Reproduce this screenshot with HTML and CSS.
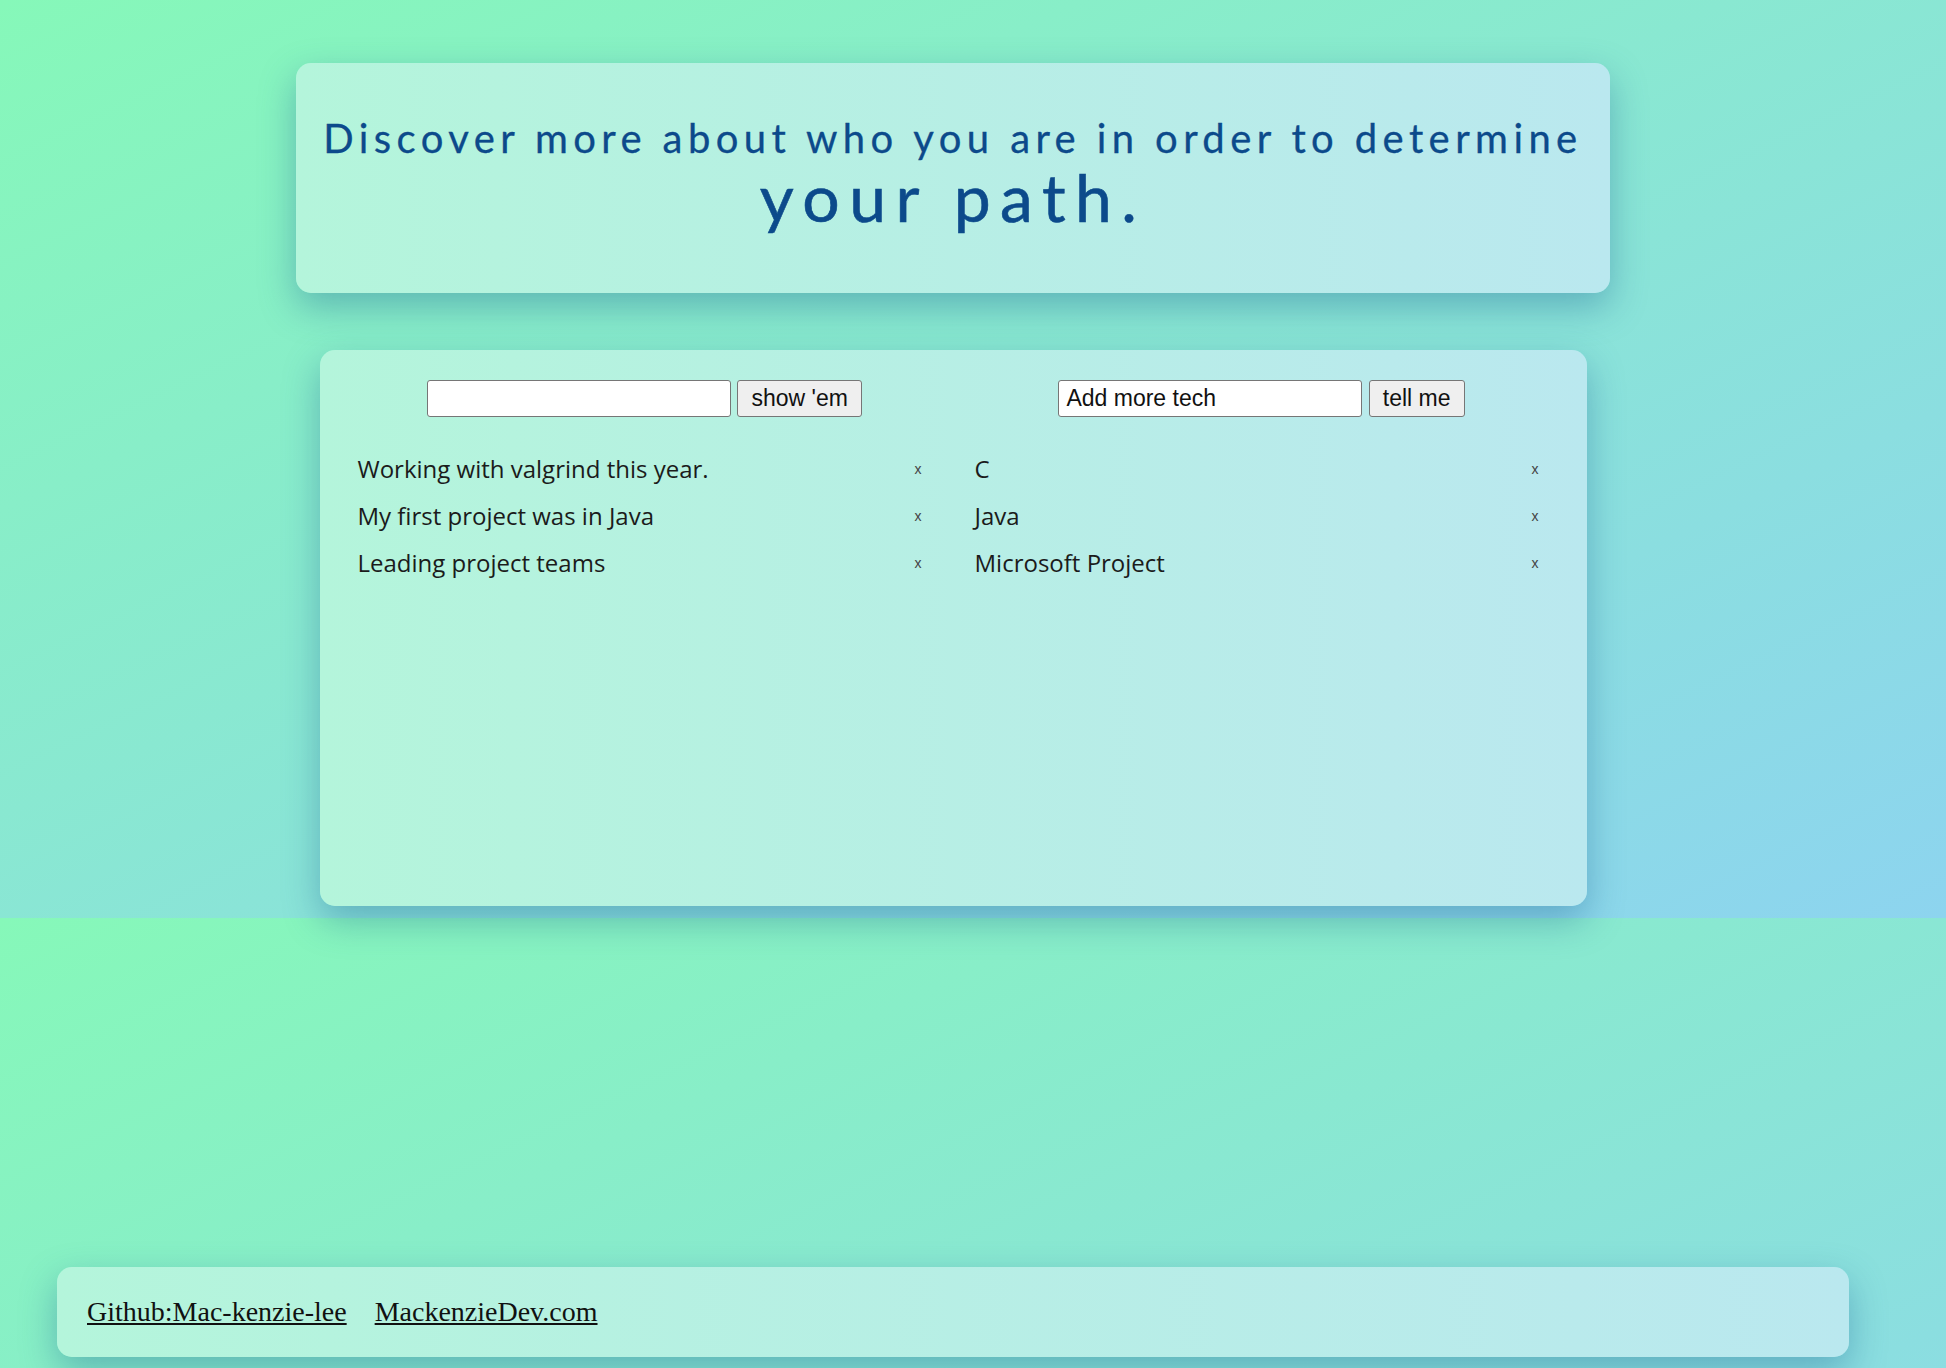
FILE: index.html
```html
<!DOCTYPE html>
<html lang="en">
<head>
<meta charset="utf-8">
<title>Discover your path</title>
<link rel="stylesheet" href="styles.css">
</head>
<body>
  <header class="hero">
    <h1 class="hero-title">
      <span class="hero-line">Discover more about who you are in order to determine</span>
      <span class="hero-big">your path.</span>
    </h1>
  </header>

  <main class="board">
    <section class="col">
      <form class="add-form">
        <input class="add-input" type="text" value="">
        <button class="add-btn" type="button">show 'em</button>
      </form>
      <ul class="items">
        <li class="item"><span class="item-text">Working with valgrind this year.</span><span class="item-x">x</span></li>
        <li class="item"><span class="item-text">My first project was in Java</span><span class="item-x">x</span></li>
        <li class="item"><span class="item-text">Leading project teams</span><span class="item-x">x</span></li>
      </ul>
    </section>
    <section class="col">
      <form class="add-form">
        <input class="add-input" type="text" value="Add more tech">
        <button class="add-btn" type="button">tell me</button>
      </form>
      <ul class="items">
        <li class="item"><span class="item-text">C</span><span class="item-x">x</span></li>
        <li class="item"><span class="item-text">Java</span><span class="item-x">x</span></li>
        <li class="item"><span class="item-text">Microsoft Project</span><span class="item-x">x</span></li>
      </ul>
    </section>
  </main>

  <footer class="foot">
    <a class="foot-link" href="#">Github:Mac-kenzie-lee</a>
    <a class="foot-link" href="#">MackenzieDev.com</a>
  </footer>
</body>
</html>
```

FILE: styles.css
```css
html {
  background-image: linear-gradient(to bottom right, #86f8b9, #8dd4ef);
  background-size: 100% 918px;
  background-repeat: repeat-y;
}

body {
  margin: 0;
  min-height: 1368px;
  box-sizing: border-box;
  padding-right: 40px;
  display: flex;
  flex-direction: column;
  align-items: center;
}

.hero,
.board,
.foot {
  border-radius: 15px;
  background: linear-gradient(to right, #b4f5db, #bae8ef);
  box-shadow: 0 14px 36px rgba(30, 100, 150, 0.4);
}

.hero {
  width: 1314px;
  height: 230px;
  margin-top: 63px;
  box-sizing: border-box;
  padding-top: 51px;
}

.hero-title {
  margin: 0;
  font-family: Lato, "Open Sans", sans-serif;
  font-weight: 400;
  color: #0c4a8b;
  text-align: center;
}

.hero-line {
  display: block;
  font-size: 40px;
  line-height: 48px;
  letter-spacing: 5.4px;
  -webkit-text-stroke: 0.3px #0c4a8b;
}

.hero-big {
  display: block;
  font-size: 66px;
  line-height: 69px;
  letter-spacing: 9.4px;
  -webkit-text-stroke: 0.6px #0c4a8b;
}

.board {
  width: 1267px;
  height: 556px;
  margin-top: 57px;
  box-sizing: border-box;
  padding: 30px 37px 0;
  display: grid;
  grid-template-columns: 1fr 1fr;
  column-gap: 41px;
  align-items: start;
}

.add-form {
  margin: 0;
  text-align: center;
  font-family: "Liberation Sans", Arial, sans-serif;
  font-size: 23px;
}

.add-input {
  width: 304px;
  height: 37px;
  box-sizing: border-box;
  padding: 0 7px;
  border: 1px solid #767676;
  border-radius: 3px;
  background: #fff;
  color: #111;
  font-family: "Liberation Sans", Arial, sans-serif;
  font-size: 23px;
  vertical-align: top;
}

.add-btn {
  height: 37px;
  box-sizing: border-box;
  padding: 0 13px;
  border: 1px solid #767676;
  border-radius: 3px;
  background: #efefef;
  color: #111;
  font-family: "Liberation Sans", Arial, sans-serif;
  font-size: 23px;
  vertical-align: top;
}

.items {
  list-style: none;
  margin: 28px 0 0;
  padding: 0 0 0 1px;
}

.item {
  height: 47px;
  display: flex;
  align-items: center;
  justify-content: space-between;
  padding-right: 11px;
}

.item-text {
  font-family: "Open Sans", "Noto Sans", sans-serif;
  font-size: 24px;
  color: #1b1b1b;
}

.item-x {
  font-family: "Liberation Sans", Arial, sans-serif;
  font-size: 14px;
  color: #444;
}

.foot {
  width: 1792px;
  height: 90px;
  margin-top: auto;
  margin-bottom: 11px;
  box-sizing: border-box;
  padding-left: 30px;
  display: flex;
  align-items: center;
  gap: 28px;
}

.foot-link {
  font-family: "Liberation Serif", "Times New Roman", serif;
  font-size: 28px;
  color: #111;
  text-decoration: underline;
}
```
